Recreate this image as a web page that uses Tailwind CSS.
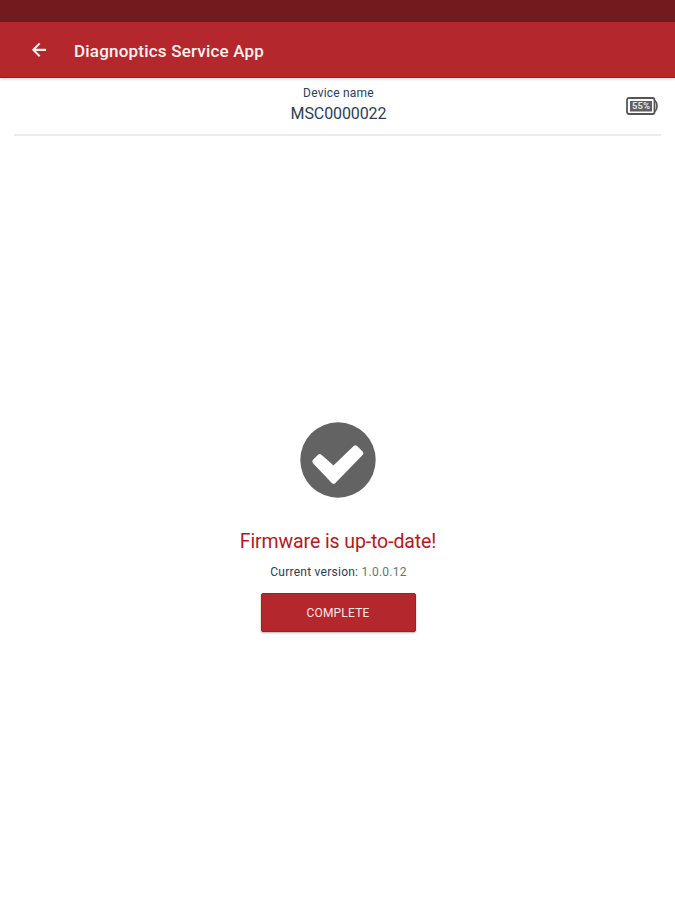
<!DOCTYPE html>
<html lang="en">
<head>
    <meta charset="UTF-8">
    <meta name="viewport" content="width=device-width, initial-scale=1.0">
    <title>Diagnoptics Service App</title>
    <script src="https://cdn.jsdelivr.net/npm/@tailwindcss/browser@4"></script>
</head>
<body class="bg-white h-screen flex flex-col overflow-hidden font-['Roboto',sans-serif] text-[#2b4055]">
    <!-- Status bar -->
    <div class="h-[22px] shrink-0 bg-[#731a1e]"></div>

    <!-- App bar -->
    <header class="h-14 shrink-0 bg-[#b3272d] border-b border-[#a8141a] shadow-[0_1px_3px_rgba(0,0,0,0.2)] flex items-center pl-[29px] text-[#fff0f0]">
        <button aria-label="Back">
            <svg class="w-5 h-5" viewBox="0 0 24 24" fill="currentColor">
                <path d="M20.5 10.4H8.2l5.5-5.5L12 3.2 3.4 11.8l8.6 8.6 1.7-1.7-5.5-5.5h12.3z"/>
            </svg>
        </button>
        <h1 class="ml-[25px] pt-1 text-[17px] font-medium tracking-[0.2px] whitespace-nowrap">Diagnoptics Service App</h1>
    </header>

    <!-- Device info -->
    <section class="h-[58px] shrink-0 mx-3.5 border-b-2 border-[#ebebeb] grid grid-cols-[1fr_auto_1fr]">
        <div class="col-start-2 pt-[7px] pl-0.5 text-center">
            <p class="text-[12px] leading-4 tracking-[0.2px]">Device name</p>
            <p class="mt-[3px] text-[16px] leading-5 tracking-[-0.1px]">MSC0000022</p>
        </div>
        <div class="justify-self-end pt-[18px] pr-[3px]">
            <svg class="w-8 h-5" viewBox="0 0 32 20">
                <rect x="1" y="2" width="27.5" height="16" rx="2" fill="none" stroke="#555" stroke-width="1.8"/>
                <path d="M28.5 5h.8q1.7 1.7 1.7 5t-1.7 5h-.8" fill="none" stroke="#555" stroke-width="1.7"/>
                <rect x="4" y="5" width="22" height="10.5" fill="#606060"/>
                <text x="15" y="13.3" text-anchor="middle" font-size="9" font-weight="700" textLength="18" lengthAdjust="spacingAndGlyphs" fill="#e4e4e4">55%</text>
            </svg>
        </div>
    </section>

    <!-- Update result -->
    <main class="flex flex-col items-center pt-[286px] pl-px">
        <svg class="w-[76px] h-[76px]" viewBox="0 0 76 76">
            <circle cx="38" cy="38" r="37.7" fill="#636363"/>
            <path d="M14.8 39.6l5-5 13.8 12.2 21.8-21 5.4 5.4-27.2 28z" fill="#fff" stroke="#fff" stroke-width="5" stroke-linejoin="round"/>
        </svg>
        <h2 class="mt-[30px] text-[19.5px] leading-7 tracking-[-0.1px] text-[#b3191f]">Firmware is up-to-date!</h2>
        <p class="mt-2 pl-px text-[12px] leading-4 tracking-[0.25px]">Current version: <span class="text-[#6b7378]">1.0.0.12</span></p>
        <button class="mt-[13px] w-[155px] h-[39px] rounded-[2px] bg-[#b3272d] border border-[#ab1a20] shadow-[0_1px_2px_rgba(0,0,0,0.3)] text-[12px] tracking-[0.2px] text-[#fbe4e4]">COMPLETE</button>
    </main>
</body>
</html>
